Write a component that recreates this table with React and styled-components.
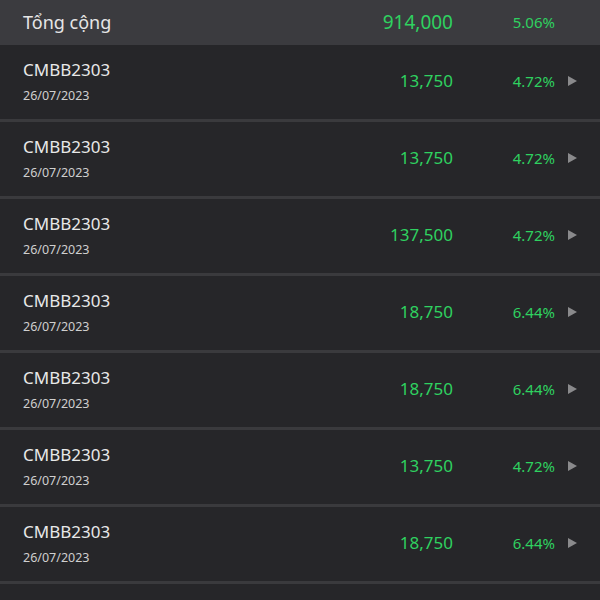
import React from "react";
import styled, { createGlobalStyle } from "styled-components";

const rows = [
  { code: "CMBB2303", date: "26/07/2023", amount: "13,750", pct: "4.72%" },
  { code: "CMBB2303", date: "26/07/2023", amount: "13,750", pct: "4.72%" },
  { code: "CMBB2303", date: "26/07/2023", amount: "137,500", pct: "4.72%" },
  { code: "CMBB2303", date: "26/07/2023", amount: "18,750", pct: "6.44%" },
  { code: "CMBB2303", date: "26/07/2023", amount: "18,750", pct: "6.44%" },
  { code: "CMBB2303", date: "26/07/2023", amount: "13,750", pct: "4.72%" },
  { code: "CMBB2303", date: "26/07/2023", amount: "18,750", pct: "6.44%" },
];

export default function App() {
  return (
    <>
      <GlobalStyle />
      <List>
        <Header>
          <Title>Tổng cộng</Title>
          <Amount $big>914,000</Amount>
          <Percent>5.06%</Percent>
          <span />
        </Header>
        {rows.map((r, i) => (
          <Row key={i}>
            <Info>
              <Code>{r.code}</Code>
              <Date>{r.date}</Date>
            </Info>
            <Amount>{r.amount}</Amount>
            <Percent>{r.pct}</Percent>
            <Arrow />
          </Row>
        ))}
      </List>
    </>
  );
}

const GlobalStyle = createGlobalStyle`
  body {
    margin: 0;
    background: #262629;
    font-family: "Noto Sans", "Open Sans", sans-serif;
  }
`;

const List = styled.div`
  width: 600px;
  height: 600px;
  background: #262629;
  overflow: hidden;
`;

const Line = styled.div`
  display: grid;
  grid-template-columns: 1fr 130px 102px 45px;
  align-items: center;
  padding-left: 23px;
  box-sizing: border-box;
`;

const Header = styled(Line)`
  height: 45px;
  padding-bottom: 2px;
  background: #3b3b3f;
`;

const Row = styled(Line)`
  height: 77px;
  padding-bottom: 3px;
  border-bottom: 3px solid #3a3a3d;
`;

const Title = styled.span`
  color: #e6e6e6;
  font-size: 18px;
`;

const Info = styled.div`
  display: flex;
  flex-direction: column;
  align-self: start;
  padding-top: 13px;
`;

const Code = styled.span`
  color: #e8e8e8;
  font-size: 17px;
  line-height: 24px;
`;

const Date = styled.span`
  color: #cfcfcf;
  font-size: 12.5px;
  line-height: 18px;
  margin-top: 5px;
`;

const Amount = styled.span`
  color: #2fd160;
  font-size: ${(p) => (p.$big ? "19px" : "17px")};
  text-align: right;
`;

const Percent = styled.span`
  color: #2fd160;
  font-size: 15px;
  text-align: right;
`;

const Arrow = styled.span`
  justify-self: start;
  margin-left: 13px;
  width: 0;
  height: 0;
  border-top: 5.5px solid transparent;
  border-bottom: 5.5px solid transparent;
  border-left: 9px solid #8a8a8c;
`;
